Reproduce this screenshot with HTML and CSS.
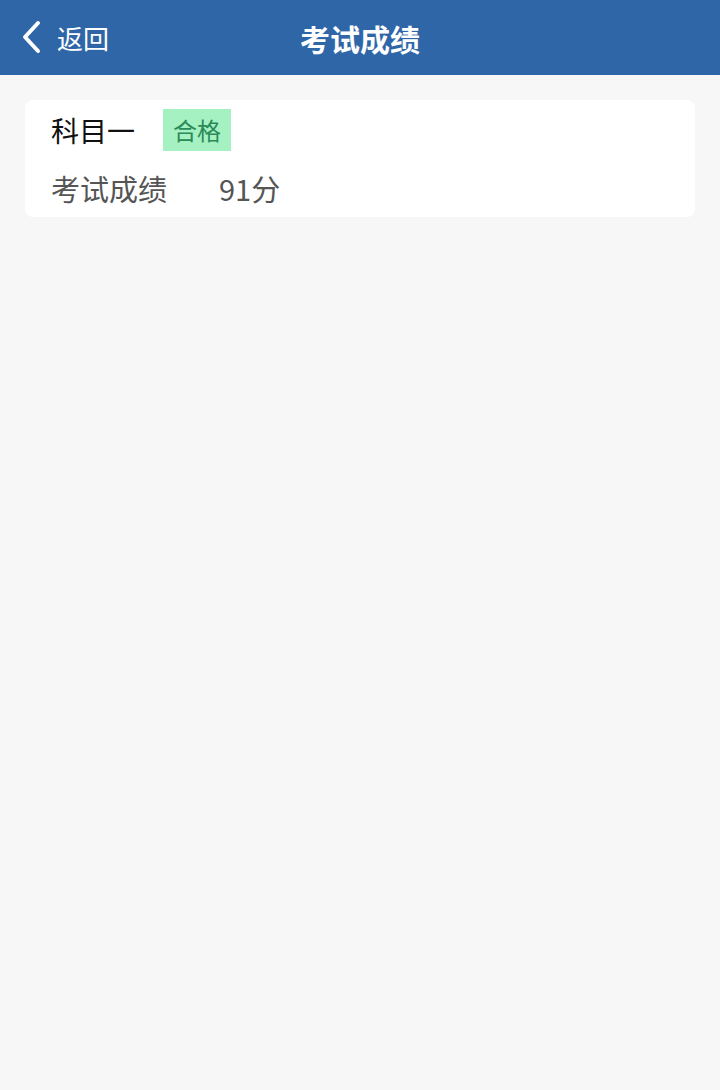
FILE: index.html
```html
<!DOCTYPE html>
<html>
<head>
<meta charset="UTF-8">
<meta name="viewport" content="width=720">
<title>考试成绩</title>
<link rel="stylesheet" href="styles.css">
</head>
<body>
<div class="topbar">
<a class="back" href="#">
<svg class="chev" width="22" height="34" viewBox="0 0 22 34"><path d="M18 3 L5 17 L18 31" fill="none" stroke="#fff" stroke-width="4" stroke-linecap="round" stroke-linejoin="round"/></svg>
<span>返回</span>
</a>
<h1>考试成绩</h1>
</div>

<div class="main">
<div class="card">
<div class="row">
<span class="subject">科目一</span>
<span class="tag">合格</span>
</div>
<div class="row">
<span class="label">考试成绩</span>
<span class="score">91分</span>
</div>
</div>
</div>
</body>
</html>
```

FILE: styles.css
```css
html, body { margin: 0; padding: 0; }
body{
    font-family: "Noto Sans CJK SC", "Noto Sans", sans-serif;
    background: #f7f7f7;
    height: 1090px;
}
.topbar{
    height: 75px;
    background: #2f66a8;
    display: flex;
    align-items: center;
    justify-content: center;
    position: relative;
}
.topbar h1{
    margin: 0;
    color: #fff;
    font-size: 30px;
    font-weight: bold;
    line-height: 1;
}
.back{
    position: absolute;
    left: 20px;
    top: 0;
    height: 75px;
    display: flex;
    align-items: center;
    color: #fff;
    text-decoration: none;
    font-size: 26px;
}
.back span{ margin-left: 15px; margin-top: -1px; }
.chev{ display: block; margin-top: -2px; }
.main{
    padding: 25px 25px 0 25px;
}
.card{
    background: #fff;
    border-radius: 8px;
    padding: 9px 26px 0 26px;
    height: 108px;
}
.row{
    display: flex;
    align-items: center;
}
.row:first-child{ height: 42px; }
.row + .row{ height: 40px; margin-top: 17px; }
.subject{
    font-size: 28px;
    color: #111;
    width: 112px;
}
.tag{
    background: #a6f1c1;
    color: #2a8a5a;
    font-size: 24px;
    height: 42px;
    line-height: 42px;
    padding: 0 10px;
}
.label{
    font-size: 29px;
    color: #555;
    width: 168px;
}
.score{
    font-size: 29px;
    color: #555;
}
```
